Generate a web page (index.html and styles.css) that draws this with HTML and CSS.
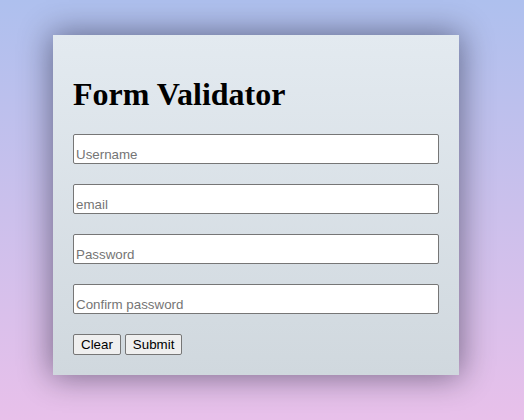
FILE: index.html
```html
<!DOCTYPE html>
<html lang="en">
<head>
<meta charset="utf-8">
<title>Form Validator</title>
<link rel="stylesheet" href="styles.css">
</head>
<body>
  <div class="card">
    <h1 class="title">Form Validator</h1>
    <form class="form">
      <input class="field" type="text" placeholder="Username">
      <input class="field" type="email" placeholder="email">
      <input class="field" type="password" placeholder="Password">
      <input class="field" type="password" placeholder="Confirm password">
      <div class="actions">
        <button class="btn" type="reset">Clear</button>
        <button class="btn" type="submit">Submit</button>
      </div>
    </form>
  </div>
</body>
</html>
```
FILE: styles.css
```css
html, body {
  height: 100%;
}
body {
  margin: 0;
  box-sizing: border-box;
  padding: 0 12px 10px 0;
  display: flex;
  align-items: center;
  justify-content: center;
  background: linear-gradient(to bottom, #aec0ee, #e8c0ea);
  font-family: "Liberation Serif", "Times New Roman", serif;
}
.card {
  width: 406px;
  box-sizing: border-box;
  padding: 20px;
  background: linear-gradient(to bottom, #e3eaf0, #d0d8de);
  box-shadow: 0 0 30px 2px rgba(0, 0, 20, 0.45);
}
.title {
  font-size: 32px;
  font-weight: bold;
  margin: 21px 0 21px;
  line-height: 37px;
  color: #000;
}
.form {
  display: flex;
  flex-direction: column;
  gap: 20px;
}
.field {
  display: block;
  width: 100%;
  height: 30px;
  box-sizing: border-box;
  margin: 0;
  padding: 10px 2px 0 2px;
  border: 1px solid #767676;
  border-radius: 2px;
  background: #fff;
  font-family: "Liberation Sans", Arial, sans-serif;
  font-size: 13.333px;
  color: #000;
}
.field::placeholder {
  color: #757575;
}
.actions {
  display: flex;
  gap: 4px;
}
.btn {
  font-family: "Liberation Sans", Arial, sans-serif;
  font-size: 13.333px;
  height: 21px;
  padding: 1px 7px;
  border: 1px solid #767676;
  border-radius: 2px;
  background: #efefef;
  color: #000;
}
```
